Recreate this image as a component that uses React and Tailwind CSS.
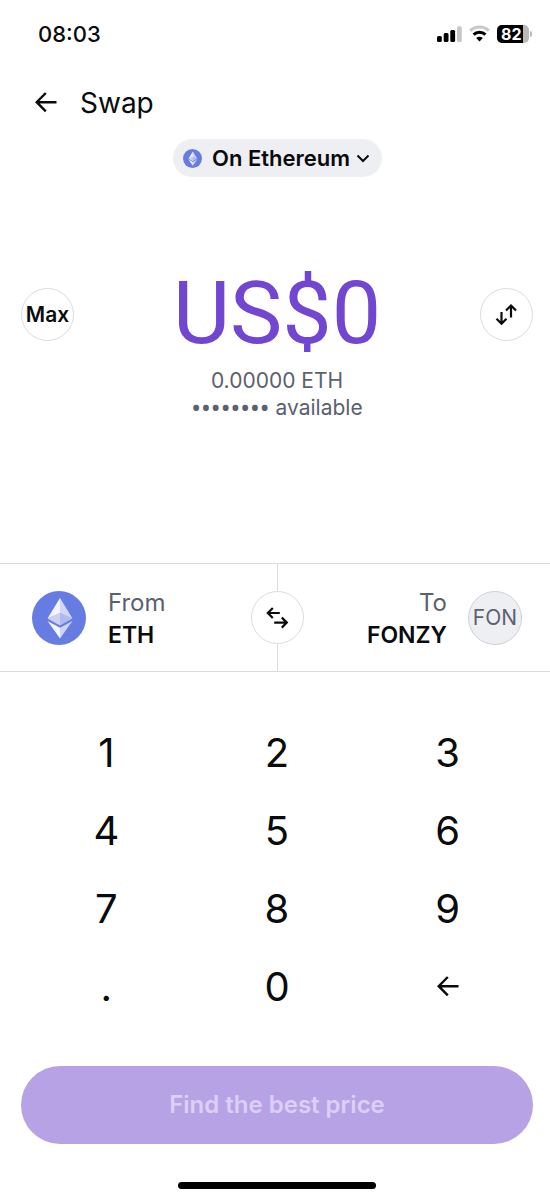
import React from "react";

function BackArrow() {
  return (
    <svg className="h-6 w-6" viewBox="0 0 24 24" fill="none" stroke="currentColor" strokeWidth="2.4" aria-hidden="true">
      <path d="M22.500 11.200H2.500M11.800 2L2.700 11.200l9.100 9.200" />
    </svg>
  );
}

function EthLogo({ className }) {
  return (
    <svg className={className} viewBox="0 0 54 54" aria-hidden="true">
      <circle cx="27" cy="27" r="27" fill="#677ce2" />
      <path d="M28 7L15.500 27.500L28 22z" fill="#fff" fillOpacity="0.92" />
      <path d="M28 7l12.500 20.500L28 22z" fill="#fff" fillOpacity="0.7" />
      <path d="M15.500 27.500L28 22v12.500z" fill="#fff" fillOpacity="0.65" />
      <path d="M40.500 27.500L28 22v12.500z" fill="#fff" fillOpacity="0.48" />
      <path d="M15.500 30L28 36.800V47.500z" fill="#fff" fillOpacity="0.92" />
      <path d="M40.500 30L28 36.800V47.500z" fill="#fff" fillOpacity="0.68" />
    </svg>
  );
}

function StatusBar() {
  return (
    <div className="flex h-[67px] items-center justify-between pl-[38px] pr-[18px]">
      <span className="text-[22px] font-medium leading-7">08:03</span>
      <div className="flex items-center gap-[7px]">
        <svg className="h-[18px] w-[26px]" viewBox="0 0 26 18" aria-hidden="true">
          <rect x="1" y="11" width="4.800" height="6" rx="1.500" fill="#000" />
          <rect x="7.700" y="8" width="4.800" height="9" rx="1.500" fill="#000" />
          <rect x="14.300" y="5" width="4.800" height="12" rx="1.500" fill="#000" />
          <rect x="21" y="1.200" width="4.800" height="15.800" rx="1.500" fill="#c8c8c8" />
        </svg>
        <svg className="h-[18px] w-[21px]" viewBox="0 0 21 18" fill="none" strokeWidth="3" aria-hidden="true">
          <path d="M1.200 5.700a13.400 13.400 0 0 1 18.600 0" stroke="#c8c8c8" />
          <path d="M4.600 9.600a8.500 8.500 0 0 1 11.800 0" stroke="#000" />
          <path d="M7.200 13a4.700 4.700 0 0 1 6.600 0L10.500 16.400z" fill="#000" />
        </svg>
        <div className="flex items-center gap-px">
          <div className="flex h-[18px] w-8 overflow-hidden rounded-[5px] bg-[#b9b9b9]">
            <span className="w-[26px] bg-black pl-1 text-[16px] font-bold leading-[18px] text-white">82</span>
          </div>
          <div className="h-[6px] w-[2px] rounded-r-full bg-[#b9b9b9]" />
        </div>
      </div>
    </div>
  );
}

const circle = "flex size-[53px] shrink-0 items-center justify-center rounded-full border border-[#dcdce0]";
const keys = ["1", "2", "3", "4", "5", "6", "7", "8", "9", ".", "0"];

export default function App() {
  return (
    <div className="flex min-h-screen flex-col bg-white font-['Inter',sans-serif] text-[#0a0b0d]">
      <StatusBar />

      <header className="flex h-[72px] items-center gap-[22px] pl-[34px]">
        <button type="button" aria-label="Back">
          <BackArrow />
        </button>
        <h1 className="text-[28px] leading-9">Swap</h1>
      </header>

      <main className="flex flex-1 flex-col">
        <div className="flex justify-center pl-[5px]">
          <button type="button" className="flex h-[38px] items-center rounded-full bg-[#eeeff3] pl-[10px] pr-3">
            <EthLogo className="size-[19px]" />
            <span className="ml-[10px] text-[22px] font-semibold leading-7">On Ethereum</span>
            <svg className="ml-[6px] h-3 w-[14px]" viewBox="0 0 14 12" fill="none" stroke="currentColor" strokeWidth="2" aria-hidden="true">
              <path d="M1.500 3.500L7 9l5.500-5.500" />
            </svg>
          </button>
        </div>

        <section className="flex flex-1 items-start justify-between pb-[120px] pl-[21px] pr-[17px] pt-[92px]">
          <button type="button" className={`${circle} mt-[19px] text-[21px] font-semibold`}>
            Max
          </button>
          <div className="text-center text-[21px] leading-[27px] text-[#5b616e]">
            <p className="mb-[10px] font-['Roboto',sans-serif] text-[88px] leading-[88px] text-[#7146d0]">US$0</p>
            <p>0.00000 ETH</p>
            <p className="flex h-[27px] items-center justify-center gap-[6px]">
              <span className="font-['Noto_Sans',sans-serif] text-[26px] leading-[27px]">••••••••</span>
              <span>available</span>
            </p>
          </div>
          <button type="button" aria-label="Switch currency" className={`${circle} mt-[19px]`}>
            <svg className="h-6 w-6" viewBox="0 0 24 24" fill="none" stroke="currentColor" strokeWidth="2.2" aria-hidden="true">
              <path d="M7.500 9v12M2.500 15.800l5 5 5-5M17 14.500V2.500M12 7.500l5-5 5 5" />
            </svg>
          </button>
        </section>

        <section className="grid grid-cols-[1fr_53px_1fr] items-center border-y border-[#dcdce0] pl-[21px] pr-[17px]">
          <button type="button" className="flex items-center gap-[22px] pl-[11px] text-left text-[24px] leading-8">
            <EthLogo className="size-[54px] shrink-0" />
            <span className="pt-[2px]">
              <span className="block text-[#5b616e]">From</span>
              <span className="block text-[23px] font-semibold">ETH</span>
            </span>
          </button>
          <div className="flex flex-col items-center">
            <div className="h-[27px] w-px bg-[#dcdce0]" />
            <button type="button" aria-label="Swap direction" className={circle}>
              <svg className="h-6 w-6" viewBox="0 0 24 24" fill="none" stroke="currentColor" strokeWidth="2.2" aria-hidden="true">
                <path d="M14.800 7H3M7.800 2l-5 5 5 5M9.200 16.600H21.500M16.800 11.600l5 5-5 5" />
              </svg>
            </button>
            <div className="h-[27px] w-px bg-[#dcdce0]" />
          </div>
          <button type="button" className="flex items-center justify-end gap-[21px] pr-[11px] text-right text-[24px] leading-8">
            <span className="pt-[2px]">
              <span className="block text-[#5b616e]">To</span>
              <span className="block text-[23px] font-semibold">FONZY</span>
            </span>
            <span className="flex size-[54px] shrink-0 items-center justify-center rounded-full border border-[#d0d1d6] bg-[#eeeff3] text-[21px] text-[#5b616e]">
              FON
            </span>
          </button>
        </section>

        <section className="grid grid-cols-3 pb-10 pl-[21px] pr-[17px] pt-[42px]">
          {keys.map((k) => (
            <button type="button" key={k} className="h-[78px] text-[40px] leading-[78px]">
              {k}
            </button>
          ))}
          <button type="button" aria-label="Delete" className="flex h-[78px] items-center justify-center">
            <BackArrow />
          </button>
        </section>

        <div className="pl-[21px] pr-[17px]">
          <button type="button" className="h-[78px] w-full rounded-full bg-[#b7a2e5] text-[24px] font-semibold text-[#dccff6]">
            Find the best price
          </button>
        </div>
      </main>

      <footer className="flex justify-center pb-[11px] pl-1 pt-[38px]">
        <div className="h-[7px] w-[198px] rounded-full bg-black" />
      </footer>
    </div>
  );
}
